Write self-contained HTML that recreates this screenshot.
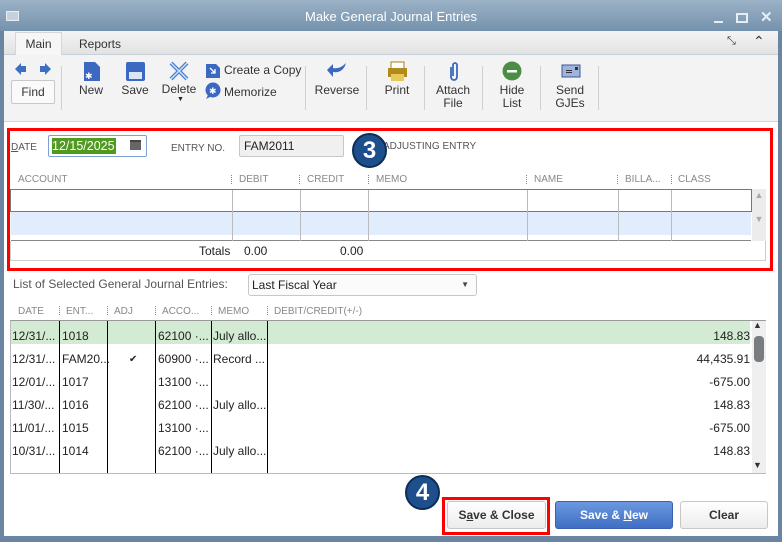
<!DOCTYPE html>
<html><head><style>
*{box-sizing:border-box;margin:0;padding:0}
body{width:782px;height:542px;overflow:hidden;background:#6a85a1;font-family:"Liberation Sans",sans-serif;font-size:12px;color:#222;position:relative}
.a{position:absolute}
.title{left:0;top:0;width:782px;height:31px;background:linear-gradient(#9bb2c6,#7592ad);color:#fff;font-size:13px;text-align:center;line-height:34px}
.win{left:4px;top:31px;width:774px;height:505px;background:#fff}
.tabs{left:4px;top:31px;width:774px;height:24px;background:linear-gradient(#f4f4f4,#e2e2e2);border-bottom:1px solid #c5d0da}
.tb{left:4px;top:55px;width:774px;height:67px;background:#f3f3f3;border-bottom:1px solid #d4d4d4}
.lbl{font-size:12px;color:#333;text-align:center;line-height:13px}
.sep{width:1px;height:44px;background:#d0d0d0;top:66px}
.hdr{font-size:10px;color:#888;top:174px}
.dot{border-left:1px dotted #888;height:9px;top:175px}
.lh{font-size:10px;color:#888;top:306px}
.row{left:11px;width:739px;height:23px;font-size:12px;line-height:23px}
.c{position:absolute;top:0}
.btn{height:28px;border:1px solid #c7c7c7;border-radius:3px;background:linear-gradient(#fff,#ececec);text-align:center;line-height:26px;font-weight:bold;font-size:12px;color:#333}
.circ{width:35px;height:35px;border-radius:50%;background:#1d4f8c;border:2px solid #0d2d55;color:#fff;font-weight:bold;font-size:24px;text-align:center;line-height:31px}
</style></head><body>
<div class="a title">Make General Journal Entries</div>
<div class="a" style="left:6px;top:11px;width:13px;height:10px;border:1px solid #e8eef3;background:#c5d2de"></div>
<div class="a" style="left:714px;top:21px;width:9px;height:2px;background:#e6edf3"></div>
<div class="a" style="left:736px;top:13px;width:12px;height:10px;border:2px solid #e6edf3"></div>
<div class="a" style="left:760px;top:8px;color:#e6edf3;font-size:15px;font-weight:bold">✕</div>
<div class="a win"></div>
<div class="a tabs"></div>
<div class="a" style="left:15px;top:32px;width:47px;height:23px;background:#f6f6f6;border:1px solid #d6d6d6;border-bottom:none;text-align:center;line-height:23px;color:#333">Main</div>
<div class="a" style="left:79px;top:37px;color:#333">Reports</div>
<div class="a" style="left:727px;top:35px;font-size:11px;color:#333">⤡</div>
<div class="a" style="left:753px;top:33px;font-size:14px;color:#333">⌃</div>
<div class="a tb"></div>
<svg class="a" style="left:14px;top:62px" width="38" height="14"><path d="M1 7L7 1V4H12V10H7V13Z" fill="#3c6fc4"/><path d="M37 7L31 1V4H26V10H31V13Z" fill="#3c6fc4"/></svg>
<div class="a" style="left:11px;top:80px;width:44px;height:24px;border:1px solid #c8c8c8;border-radius:2px;background:#fafafa;text-align:center;line-height:22px;color:#333">Find</div>
<div class="a sep" style="left:61px"></div>
<svg class="a" style="left:82px;top:61px" width="20" height="21"><path d="M2 1H13L18 6V20H2Z" fill="#3b68c0"/><text x="3" y="18" fill="#fff" font-size="9">✱</text></svg>
<div class="a lbl" style="left:72px;top:84px;width:38px">New</div>
<svg class="a" style="left:125px;top:61px" width="21" height="21"><rect x="1" y="1" width="19" height="19" rx="2" fill="#3b68c0"/><rect x="4" y="11" width="13" height="7" fill="#dde6f6"/></svg>
<div class="a lbl" style="left:116px;top:84px;width:38px">Save</div>
<svg class="a" style="left:168px;top:61px" width="22" height="20"><path d="M3 2L19 18M19 2L3 18" stroke="#4a7fd0" stroke-width="4"/><path d="M3 2L19 18M19 2L3 18" stroke="#cfe0f7" stroke-width="1.5"/></svg>
<div class="a lbl" style="left:160px;top:83px;width:38px">Delete</div>
<div class="a" style="left:177px;top:96px;font-size:7px">▼</div>
<svg class="a" style="left:205px;top:61px" width="16" height="18"><path d="M1 3H11L15 7V17H1Z" fill="#3b68c0"/><path d="M5 7L10 12M10 8V12H6" stroke="#fff" stroke-width="1.3" fill="none"/></svg>
<div class="a" style="left:224px;top:63px;color:#333">Create a Copy</div>
<svg class="a" style="left:204px;top:82px" width="18" height="17"><circle cx="9" cy="8" r="7.5" fill="#3b68c0"/><path d="M4 13L2 17 8 14Z" fill="#3b68c0"/><text x="5" y="12" fill="#fff" font-size="9">✱</text></svg>
<div class="a" style="left:224px;top:85px;color:#333">Memorize</div>
<div class="a sep" style="left:305px"></div>
<svg class="a" style="left:326px;top:61px" width="22" height="18"><path d="M20 2C18 10 12 12 7 11V16L1 9 7 3V7C12 8 16 6 20 2Z" fill="#3b68c0"/></svg>
<div class="a lbl" style="left:312px;top:84px;width:50px">Reverse</div>
<div class="a sep" style="left:366px"></div>
<svg class="a" style="left:387px;top:61px" width="21" height="21"><rect x="4" y="1" width="13" height="7" fill="#fff" stroke="#a08020"/><rect x="1" y="7" width="19" height="9" fill="#b08a1a"/><rect x="4" y="13" width="13" height="7" fill="#e7c95a"/></svg>
<div class="a lbl" style="left:378px;top:84px;width:38px">Print</div>
<div class="a sep" style="left:424px"></div>
<svg class="a" style="left:448px;top:61px" width="12" height="22"><path d="M3 6V16A3 3 0 0 0 9 16V4A2 2 0 0 0 5 4V15" stroke="#3b68c0" stroke-width="1.8" fill="none"/></svg>
<div class="a lbl" style="left:433px;top:84px;width:40px">Attach<br>File</div>
<div class="a sep" style="left:482px"></div>
<svg class="a" style="left:502px;top:61px" width="20" height="20"><circle cx="10" cy="10" r="9.5" fill="#4a8e45"/><rect x="5" y="9" width="10" height="2.5" fill="#fff"/></svg>
<div class="a lbl" style="left:492px;top:84px;width:40px">Hide<br>List</div>
<div class="a sep" style="left:540px"></div>
<svg class="a" style="left:561px;top:64px" width="20" height="14"><rect x="1" y="1" width="18" height="12" fill="#9fb3dc" stroke="#3b5a98"/><rect x="5" y="6" width="6" height="1" fill="#333"/><rect x="5" y="8" width="6" height="1" fill="#333"/><rect x="14" y="3" width="3" height="3" fill="#333"/></svg>
<div class="a lbl" style="left:550px;top:84px;width:40px">Send<br>GJEs</div>
<div class="a sep" style="left:598px"></div>
<div class="a" style="left:7px;top:128px;width:766px;height:143px;border:3px solid #f00"></div>
<div class="a" style="left:11px;top:142px;font-size:10px;color:#555"><u>D</u>ATE</div>
<div class="a" style="left:48px;top:135px;width:99px;height:22px;border:1px solid #7aa0d4;border-radius:2px;background:#fff"></div>
<div class="a" style="left:52px;top:138px;width:64px;height:16px;background:#4f9a1f;color:#fff;font-size:12.5px;line-height:16px;white-space:nowrap;overflow:hidden">12/15/2025</div>
<div class="a" style="left:130px;top:140px;width:11px;height:10px;background:#666;border-top:2px solid #444"></div>
<div class="a" style="left:171px;top:143px;font-size:10px;color:#555">ENTRY NO.</div>
<div class="a" style="left:239px;top:135px;width:105px;height:22px;border:1px solid #c7c7c7;border-radius:2px;background:#f0f0f0;padding:3px 4px;font-size:12px">FAM2011</div>
<div class="a" style="left:383px;top:141px;font-size:10px;color:#555">ADJUSTING ENTRY</div>
<div class="a circ" style="left:352px;top:133px">3</div>
<div class="a hdr" style="left:18px">ACCOUNT</div>
<div class="a dot" style="left:231px"></div><div class="a hdr" style="left:239px">DEBIT</div>
<div class="a dot" style="left:299px"></div><div class="a hdr" style="left:307px">CREDIT</div>
<div class="a dot" style="left:368px"></div><div class="a hdr" style="left:376px">MEMO</div>
<div class="a dot" style="left:526px"></div><div class="a hdr" style="left:534px">NAME</div>
<div class="a dot" style="left:617px"></div><div class="a hdr" style="left:625px">BILLA...</div>
<div class="a dot" style="left:671px"></div><div class="a hdr" style="left:678px">CLASS</div>
<div class="a" style="left:10px;top:189px;width:742px;height:23px;border:1px solid #777;background:#fff"></div>
<div class="a" style="left:11px;top:212px;width:740px;height:23px;background:#e1edfc"></div>
<div class="a" style="left:11px;top:235px;width:740px;height:6px;border-bottom:1px solid #888"></div>
<div class="a" style="left:232px;top:190px;width:1px;height:51px;background:#bbb"></div>
<div class="a" style="left:300px;top:190px;width:1px;height:51px;background:#bbb"></div>
<div class="a" style="left:368px;top:190px;width:1px;height:51px;background:#bbb"></div>
<div class="a" style="left:527px;top:190px;width:1px;height:51px;background:#bbb"></div>
<div class="a" style="left:618px;top:190px;width:1px;height:51px;background:#bbb"></div>
<div class="a" style="left:671px;top:190px;width:1px;height:51px;background:#bbb"></div>
<div class="a" style="left:752px;top:189px;width:14px;height:52px;background:#ececec;color:#aaa;font-size:9px;text-align:center;line-height:12px">▲<br><br>▼</div>
<div class="a" style="left:10px;top:241px;width:756px;height:20px;border:1px solid #ccc;border-top:none"></div>
<div class="a" style="left:199px;top:244px;font-size:12px">Totals</div>
<div class="a" style="left:244px;top:244px;font-size:12px">0.00</div>
<div class="a" style="left:340px;top:244px;font-size:12px">0.00</div>
<div class="a" style="left:13px;top:277px;color:#555">List of Selected General Journal Entries:</div>
<div class="a" style="left:248px;top:274px;width:229px;height:22px;border:1px solid #c7c7c7;border-radius:3px;background:#fbfbfb;padding:3px 3px;font-size:12px">Last Fiscal Year<span style="position:absolute;right:7px;top:5px;font-size:8px;color:#444">▼</span></div>
<div class="a lh" style="left:18px">DATE</div>
<div class="a dot" style="left:59px;top:306px"></div><div class="a lh" style="left:66px">ENT...</div>
<div class="a dot" style="left:107px;top:306px"></div><div class="a lh" style="left:114px">ADJ</div>
<div class="a dot" style="left:155px;top:306px"></div><div class="a lh" style="left:162px">ACCO...</div>
<div class="a dot" style="left:211px;top:306px"></div><div class="a lh" style="left:218px">MEMO</div>
<div class="a dot" style="left:267px;top:306px"></div><div class="a lh" style="left:274px">DEBIT/CREDIT(+/-)</div>
<div class="a" style="left:10px;top:320px;width:756px;height:154px;border:1px solid #bbb;border-top:1px solid #999"></div>
<div class="a row" style="top:321px;background:#d3ead3"></div>
<div class="a" style="left:59px;top:321px;width:1px;height:152px;background:#000"></div>
<div class="a" style="left:107px;top:321px;width:1px;height:152px;background:#000"></div>
<div class="a" style="left:155px;top:321px;width:1px;height:152px;background:#000"></div>
<div class="a" style="left:211px;top:321px;width:1px;height:152px;background:#000"></div>
<div class="a" style="left:267px;top:321px;width:1px;height:152px;background:#000"></div>
<div class="a row" style="top:325px"><span class="c" style="left:1px">12/31/...</span><span class="c" style="left:51px">1018</span><span class="c" style="left:147px">62100 ·...</span><span class="c" style="left:202px">July allo...</span><span class="c" style="right:0">148.83</span></div>
<div class="a row" style="top:348px"><span class="c" style="left:1px">12/31/...</span><span class="c" style="left:51px">FAM20...</span><span class="c" style="left:118px;font-size:10px">✔</span><span class="c" style="left:147px">60900 ·...</span><span class="c" style="left:202px">Record ...</span><span class="c" style="right:0">44,435.91</span></div>
<div class="a row" style="top:371px"><span class="c" style="left:1px">12/01/...</span><span class="c" style="left:51px">1017</span><span class="c" style="left:147px">13100 ·...</span><span class="c" style="right:0">-675.00</span></div>
<div class="a row" style="top:394px"><span class="c" style="left:1px">11/30/...</span><span class="c" style="left:51px">1016</span><span class="c" style="left:147px">62100 ·...</span><span class="c" style="left:202px">July allo...</span><span class="c" style="right:0">148.83</span></div>
<div class="a row" style="top:417px"><span class="c" style="left:1px">11/01/...</span><span class="c" style="left:51px">1015</span><span class="c" style="left:147px">13100 ·...</span><span class="c" style="right:0">-675.00</span></div>
<div class="a row" style="top:440px"><span class="c" style="left:1px">10/31/...</span><span class="c" style="left:51px">1014</span><span class="c" style="left:147px">62100 ·...</span><span class="c" style="left:202px">July allo...</span><span class="c" style="right:0">148.83</span></div>
<div class="a" style="left:752px;top:321px;width:14px;height:152px;background:#efefef"></div>
<div class="a" style="left:753px;top:320px;font-size:9px;color:#333">▲</div>
<div class="a" style="left:754px;top:336px;width:10px;height:26px;border-radius:4px;background:#7a7d80"></div>
<div class="a" style="left:753px;top:460px;font-size:9px;color:#333">▼</div>
<div class="a circ" style="left:405px;top:475px">4</div>
<div class="a" style="left:442px;top:497px;width:108px;height:38px;border:3px solid #f00"></div>
<div class="a btn" style="left:447px;top:501px;width:99px"><span>S<u>a</u>ve &amp; Close</span></div>
<div class="a btn" style="left:555px;top:501px;width:118px;background:linear-gradient(#6b98e0,#3f6fc4);border-color:#3a63ad;color:#fff">Save &amp; <u>N</u>ew</div>
<div class="a btn" style="left:680px;top:501px;width:88px">Clear</div>
</body></html>
